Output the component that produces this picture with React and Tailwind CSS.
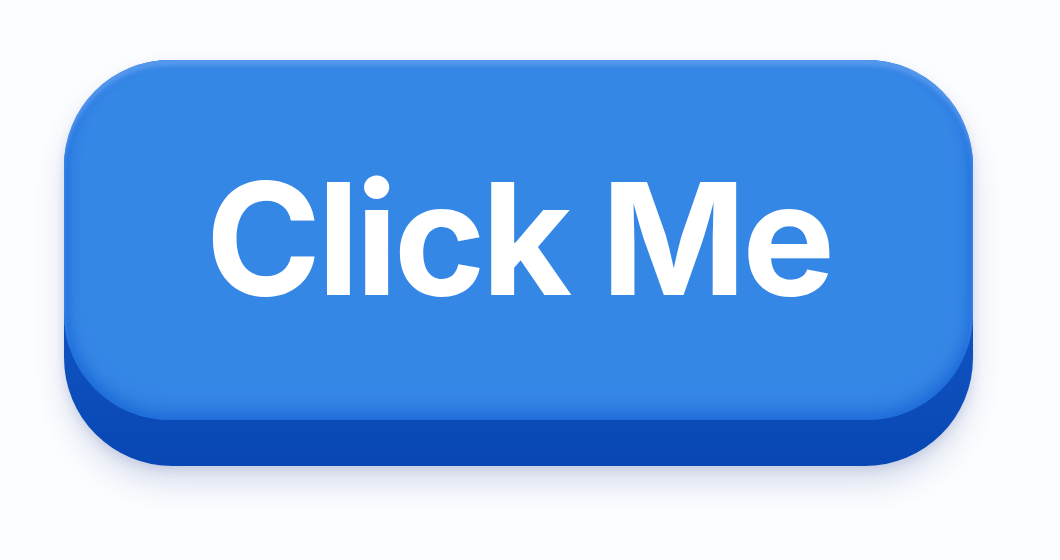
export default function App() {
    return (
        <div className="w-[1060px] h-[560px] bg-[#fcfdff] flex items-start justify-center pt-[60px]">
            {/* button body: darker side shows below the face */}
            <div className="ml-[-23px] w-[909px] h-[406px] rounded-[108px] bg-gradient-to-b from-[#1f6ad8] to-[#0847b4] pb-[46px] shadow-[0_18px_30px_rgba(30,60,140,0.16),0_4px_10px_rgba(30,60,140,0.12)]">
                <div className="h-full w-full rounded-[106px] bg-[#3587e6] flex items-center justify-center shadow-[inset_0_6px_4px_rgba(120,175,245,0.55),inset_6px_0_8px_rgba(20,100,220,0.35),inset_-6px_0_8px_rgba(20,100,220,0.35),inset_0_-12px_16px_rgba(25,95,210,0.5)]">
                    <span
                        className="text-white font-bold text-[156px] leading-none tracking-[-4px] mt-[-2px]"
                        style={{ fontFamily: 'Inter, "Noto Sans", sans-serif' }}
                    >
                        Click Me
                    </span>
                </div>
            </div>
        </div>
    );
}
